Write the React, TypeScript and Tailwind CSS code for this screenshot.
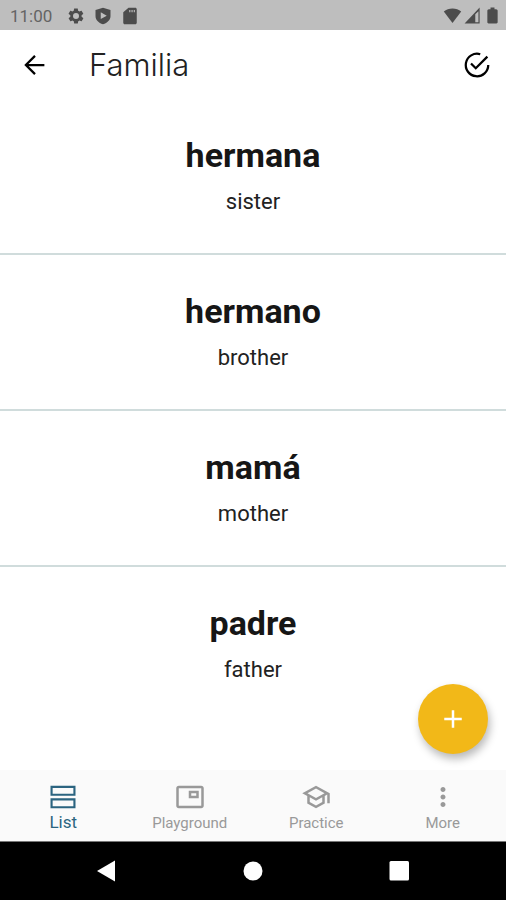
import { ReactNode, useState } from "react"

const words = [
  { word: "hermana", translation: "sister" },
  { word: "hermano", translation: "brother" },
  { word: "mamá", translation: "mother" },
  { word: "padre", translation: "father" },
]

const tabs = [
  {
    name: "List",
    path: "M2 3v8h20V3H2zm18.3 6.300H3.700V4.700h16.600v4.600zM2 13v8h20v-8H2zm18.300 6.300H3.700v-4.600h16.600v4.600z",
  },
  {
    name: "Playground",
    path: "M19 7h-8v6h8V7zm-2 4h-4V9h4v2zm4-8H3c-1.1 0-2 .9-2 2v14c0 1.1.9 2 2 2h18c1.1 0 2-.9 2-2V5c0-1.1-.9-2-2-2zm0 16H3V5h18v14z",
  },
  {
    name: "Practice",
    path: "M12 3L1 9l4 2.18v6L12 21l7-3.82v-6l2-1.09V17h2V9L12 3zm6.82 6L12 12.72 5.18 9 12 5.28 18.82 9zM17 15.99l-5 2.73-5-2.73v-3.72L12 15l5-2.73v3.72z",
  },
  {
    name: "More",
    path: "M12 8c1.1 0 2-.9 2-2s-.9-2-2-2-2 .9-2 2 .9 2 2 2zm0 2c-1.1 0-2 .9-2 2s.9 2 2 2 2-.9 2-2-.9-2-2-2zm0 6c-1.1 0-2 .9-2 2s.9 2 2 2 2-.9 2-2-.9-2-2-2z",
  },
]

const Icon = ({ className, children }: { className: string; children: ReactNode }) => (
  <svg viewBox="0 0 24 24" fill="currentColor" aria-hidden="true" className={`block shrink-0 ${className}`}>
    {children}
  </svg>
)

const StatusBar = () => (
  <div className="flex h-[30px] items-center justify-between bg-[#bebebe] pt-px pr-1 pl-[10px] text-[#4c4c4c]">
    <div className="flex items-center gap-[9px]">
      <span className="mr-[6px] text-[17px] leading-5 text-[#646464]">11:00</span>
      {/* settings */}
      <Icon className="size-[18px]">
        <path
          fillRule="evenodd"
          d="M19.4 13c0-.3.1-.6.1-1s0-.7-.1-1l2.1-1.7c.2-.1.3-.4.1-.6l-2-3.5c-.1-.2-.4-.3-.6-.2l-2.5 1c-.5-.4-1.1-.7-1.7-1l-.4-2.6c0-.2-.2-.4-.5-.4h-4c-.2 0-.4.2-.5.4L9 5c-.6.3-1.1.6-1.7 1l-2.5-1c-.2-.1-.5 0-.6.2l-2 3.5c-.1.2 0 .5.1.6L4.5 11c0 .3-.1.6-.1 1s0 .7.1 1l-2.1 1.7c-.2.1-.3.4-.1.6l2 3.5c.1.2.4.3.6.2l2.5-1c.5.4 1.1.7 1.7 1l.4 2.6c0 .2.2.4.5.4h4c.2 0 .4-.2.5-.4l.4-2.6c.6-.3 1.2-.6 1.7-1l2.5 1c.2.1.5 0 .6-.2l2-3.5c.1-.2.1-.5-.1-.6L19.4 13zM12 16a4 4 0 1 1 0-8 4 4 0 0 1 0 8z"
        />
      </Icon>
      {/* shield with play mark */}
      <Icon className="size-[18px]">
        <path
          fillRule="evenodd"
          d="M12 1 2 4v8c0 5 4 9.2 10 11 6-1.8 10-6 10-11V4L12 1zM9 7l8 4.5L9 16V7z"
        />
      </Icon>
      {/* memory card */}
      <Icon className="size-[18px]">
        <path d="M19 1h-9L3 7v14c0 1.1.9 2 2 2h14c1.1 0 2-.9 2-2V3c0-1.1-.9-2-2-2zm-6.5 6H11V4h1.5v3zm3 0H14V4h1.5v3zm3 0H17V4h1.5v3z" />
      </Icon>
    </div>
    <div className="flex items-center gap-px">
      <Icon className="size-[19px]">
        <path d="M12 21.5 1 7C4 4.2 7.8 3 12 3s8 1.2 11 4L12 21.5z" />
      </Icon>
      <Icon className="size-[19px]">
        <path fillRule="evenodd" d="M2 22h19V2L2 22zm13.5-1.5v-10l4-4v14h-4z" />
      </Icon>
      <Icon className="size-[19px]">
        <path d="M16.5 4h-2V2h-5v2h-2c-1.3 0-2 1-2 2v14.5c0 .8.7 1.5 1.500 1.500h10c.8 0 1.500-.7 1.500-1.500V6c0-1-.7-2-2-2z" />
      </Icon>
    </div>
  </div>
)

const Header = () => (
  <header className="flex h-[69px] items-center px-[14px]">
    <button type="button" aria-label="Back" className="p-[6px] text-black">
      <Icon className="size-[30px]">
        <path
          d="M19.5 12H5M12 4.7 4.7 12l7.3 7.3"
          fill="none"
          stroke="currentColor"
          strokeWidth="1.8"
        />
      </Icon>
    </button>
    <h1 className="ml-[33px] flex-1 font-['Inter',sans-serif] text-[31px] leading-9 font-light text-[#222]">
      Familia
    </h1>
    <button type="button" aria-label="Mark as learned" className="text-black">
      <Icon className="size-[30px]">
        <path
          d="M21 12a9 9 0 1 1-6.4-8.6M7.2 10.8l3.8 3.8 9.3-9.3"
          fill="none"
          stroke="currentColor"
          strokeWidth="1.8"
        />
      </Icon>
    </button>
  </header>
)

const SystemBar = () => (
  <div className="flex h-[58px] items-center justify-around bg-black px-8 text-white">
    <button type="button" aria-label="System back">
      <Icon className="size-6">
        <path d="M21 1.5v21L3 12z" />
      </Icon>
    </button>
    <button type="button" aria-label="Home">
      <Icon className="size-6">
        <circle cx="12" cy="12" r="9.5" />
      </Icon>
    </button>
    <button type="button" aria-label="Recent apps">
      <Icon className="size-6">
        <rect x="1.5" y="2" width="19.5" height="19.5" rx="1.5" />
      </Icon>
    </button>
  </div>
)

const App = () => {
  const [active, setActive] = useState("List")

  return (
    <div className="flex min-h-screen flex-col bg-white font-['Roboto',sans-serif]">
      <StatusBar />
      <Header />

      <main className="relative flex-1">
        <ul>
          {words.map(({ word, translation }) => (
            <li
              key={word}
              className="flex flex-col items-center gap-3 border-b-2 border-[#d0dcdc] pt-[34px] pb-[38px] text-center last:border-b-0"
            >
              <p className="text-[34px] leading-[44px] font-bold text-[#161616]">{word}</p>
              <p className="text-[22px] leading-[26px] text-[#222]">{translation}</p>
            </li>
          ))}
        </ul>

        <button
          type="button"
          aria-label="Add word"
          className="absolute right-[18px] bottom-4 flex size-[70px] items-center justify-center rounded-full bg-[#f2b818] text-white shadow-[2px_5px_8px_rgba(0,0,0,0.28)]"
        >
          <Icon className="size-[30px]">
            <path d="M19 13h-6v6h-2v-6H5v-2h6V5h2v6h6v2z" />
          </Icon>
        </button>
      </main>

      <nav className="flex h-[72px] border-b border-[#777] bg-[#fafafa]">
        {tabs.map(({ name, path }) => (
          <button
            key={name}
            type="button"
            onClick={() => setActive(name)}
            className={`flex flex-1 flex-col items-center pt-3 ${active === name ? "text-[#2b6480]" : "text-[#999]"}`}
          >
            <Icon className="size-[30px]">
              <path d={path} />
            </Icon>
            <span className={active === name ? "text-[17px] leading-5" : "text-[15px] leading-[22px]"}>{name}</span>
          </button>
        ))}
      </nav>

      <SystemBar />
    </div>
  )
}

export default App
